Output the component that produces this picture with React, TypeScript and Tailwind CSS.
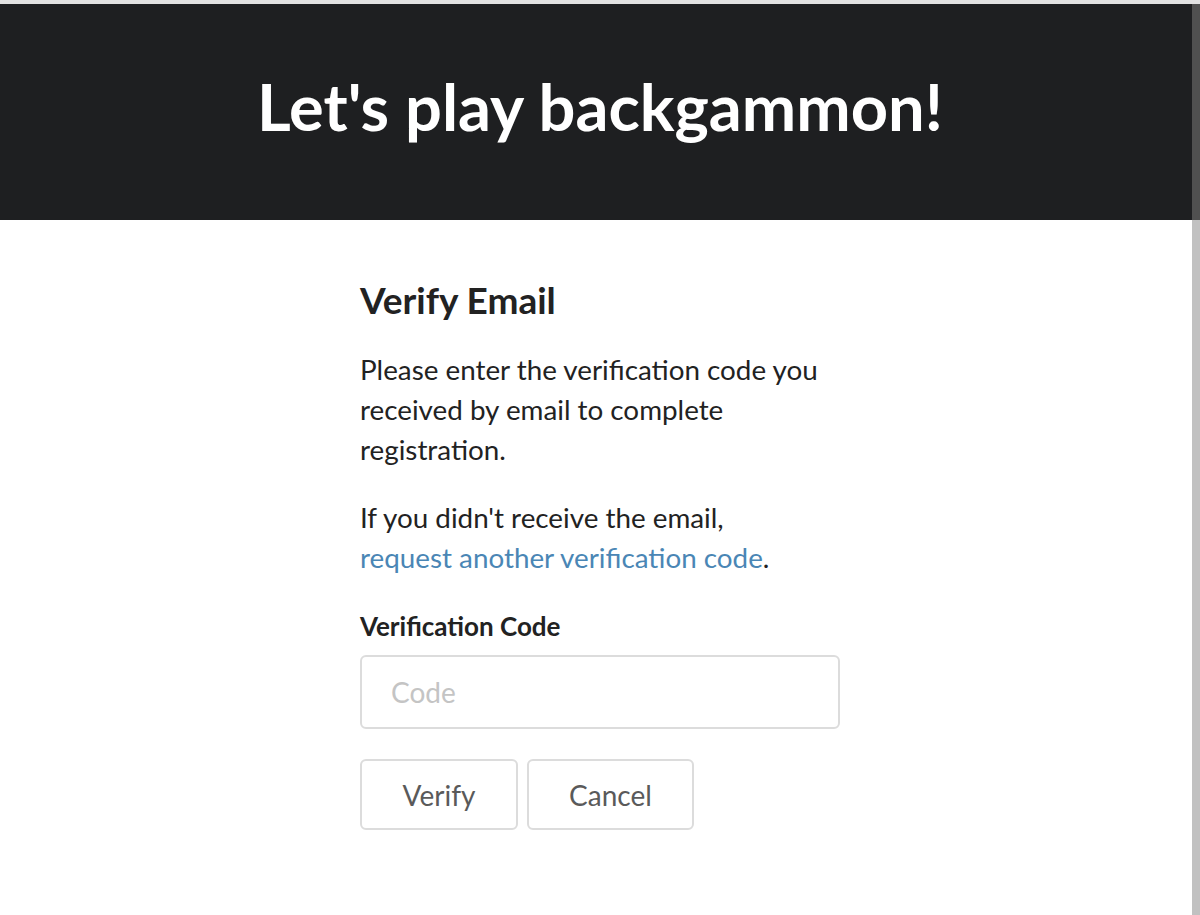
export default function App() {
  return (
    <div className="min-h-[915px] bg-white font-['Lato','Noto_Sans',sans-serif] text-[#222]">
      {/* scrollbar strip */}
      <div className="fixed right-0 top-1 bottom-0 w-2 bg-[#c1c1c1]">
        <div className="h-[216px] bg-[#505050]" />
      </div>

      <div className="h-1 bg-[#e2e2e2]" />

      <header className="h-[216px] pb-3 bg-[#1e1f21] flex items-center justify-center">
        <h1 className="text-[65px] font-bold text-white leading-none">
          Let's play backgammon!
        </h1>
      </header>

      <main className="w-[480px] mx-auto pt-[60px]">
        <h2 className="text-[37px] font-bold leading-[40px] mb-[30px]">
          Verify Email
        </h2>

        <p className="text-[27.8px] leading-[40px] mb-[28px]">
          Please enter the verification code you received by email to complete registration.
        </p>

        <p className="text-[27.8px] leading-[40px] mb-[32px]">
          If you didn't receive the email,{" "}
          <a href="#" className="text-[#4a86b5] whitespace-nowrap">
            request another verification code
          </a>
          .
        </p>

        <label className="block text-[26px] font-bold leading-[32px] mb-[13px]">
          Verification Code
        </label>

        <input
          type="text"
          placeholder="Code"
          className="block w-full h-[74px] px-[29px] text-[28px] border-2 border-[#dcdcdc] rounded-[6px] outline-none placeholder:text-[#c4c4c4]"
        />

        <div className="flex gap-[9px] mt-[30px]">
          <button className="w-[158px] h-[71px] text-[28px] text-[#5a5a5a] border-2 border-[#dcdcdc] rounded-[6px] bg-white">
            Verify
          </button>
          <button className="w-[167px] h-[71px] text-[28px] text-[#5a5a5a] border-2 border-[#dcdcdc] rounded-[6px] bg-white">
            Cancel
          </button>
        </div>
      </main>
    </div>
  );
}
